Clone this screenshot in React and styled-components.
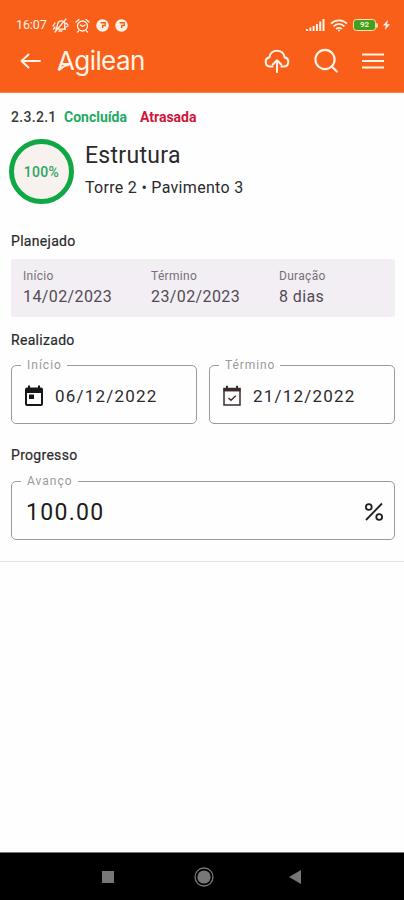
import React from 'react'
import styled, { createGlobalStyle } from 'styled-components'

const GlobalStyle = createGlobalStyle`
  * {
    box-sizing: border-box;
  }
  body {
    margin: 0;
    background: #fefefe;
    font-family: Roboto, "Liberation Sans", sans-serif;
    color: #2b2a2c;
  }
`

const Screen = styled.div`
  width: 404px;
  height: 900px;
  display: flex;
  flex-direction: column;
  overflow: hidden;
`

const Header = styled.header`
  height: 93px;
  flex: none;
  background: #fa5f1a;
  color: #fff3e8;
  padding-top: 14px;
  border-bottom: 1px solid #f98350;
`

const StatusBar = styled.div`
  height: 22px;
  display: flex;
  align-items: center;
  justify-content: space-between;
  padding: 0 14px 0 16px;
`

const StatusGroup = styled.div`
  display: flex;
  align-items: center;
  gap: ${props => props.$gap}px;
  & svg {
    display: block;
  }
`

const Clock = styled.span`
  font-size: 12.5px;
  line-height: 22px;
  width: 31px;
  letter-spacing: -0.1px;
  white-space: nowrap;
`

const AppBar = styled.div`
  height: 50px;
  display: flex;
  align-items: center;
  padding: 0 20px 0 19px;
  & svg {
    display: block;
  }
`

const Brand = styled.div`
  position: relative;
  margin-left: 15px;
  flex: 1;
  font-family: Inter, "Liberation Sans", sans-serif;
  font-size: 26px;
  line-height: 50px;
  letter-spacing: -0.6px;
  & svg {
    position: absolute;
    left: 0;
    top: 27px;
  }
`

const Actions = styled.div`
  display: flex;
  align-items: center;
  gap: 23px;
`

const Content = styled.main`
  padding: 14px 9px 0 11px;
  height: 469px;
  border-bottom: 1px solid #e6e6e6;
`

const Tags = styled.div`
  display: flex;
  font-size: 14px;
  line-height: 20px;
`

const Tag = styled.span`
  color: ${props => props.$color};
  font-weight: ${props => props.$bold ? 700 : 500};
  width: ${props => props.$width}px;
  letter-spacing: ${props => props.$spacing || 0}px;
  white-space: nowrap;
`

const Summary = styled.div`
  display: flex;
  align-items: center;
  gap: 11px;
  margin: 12px 0 0 -2px;
`

const Ring = styled.div`
  width: 65px;
  height: 65px;
  border: 5px solid #0fa844;
  border-radius: 50%;
  background: #f7f2ee;
  color: #2fa563;
  font-size: 14px;
  font-weight: 500;
  letter-spacing: 0.3px;
  display: flex;
  align-items: center;
  justify-content: center;
`

const Title = styled.h1`
  margin: 0;
  font-size: 23px;
  font-weight: 400;
  line-height: 32px;
  letter-spacing: 0.3px;
`

const Place = styled.p`
  margin: 0;
  font-size: 16px;
  line-height: 32px;
  letter-spacing: 0.3px;
`

const SectionTitle = styled.h2`
  margin: ${props => props.$top}px 0 ${props => props.$bottom}px;
  font-size: 14px;
  font-weight: 400;
  line-height: 20px;
  letter-spacing: 0.3px;
  -webkit-text-stroke: 0.2px;
`

const Planned = styled.div`
  height: 58px;
  border-radius: 3px;
  background: #f2eef4;
  display: grid;
  grid-template-columns: 128px 128px 1fr;
  padding: 8px 12px 0;
`

const PlannedLabel = styled.div`
  font-size: 12px;
  line-height: 18px;
  color: #777078;
  letter-spacing: 0.3px;
`

const PlannedValue = styled.div`
  font-size: 16px;
  line-height: 24px;
  color: #504c53;
  letter-spacing: 0.4px;
`

const Fields = styled.div`
  display: grid;
  grid-template-columns: ${props => props.$columns};
  gap: 12px;
`

const Field = styled.fieldset`
  margin: 0;
  min-width: 0;
  height: 65px;
  border: 1px solid #9a9a9a;
  border-radius: 5px;
  padding: 0 10px 0 12px;
`

const Legend = styled.legend`
  margin-left: -3px;
  padding: 0 5px 0 6px;
  font-size: 12px;
  line-height: 12px;
  letter-spacing: ${props => props.$spacing}px;
  color: #9a9a9a;
`

const FieldRow = styled.div`
  height: 50px;
  display: flex;
  align-items: center;
`

const DateText = styled.span`
  margin-left: 11px;
  font-size: 17px;
  letter-spacing: 1.2px;
`

const Amount = styled.span`
  flex: 1;
  margin-left: 2px;
  font-size: 23px;
  letter-spacing: 1.3px;
  color: #1c1c1c;
`

const Blank = styled.div`
  flex: 1;
`

const NavBar = styled.nav`
  height: 48px;
  background: #000;
  border-top: 1px solid #777;
  display: flex;
  align-items: center;
  padding-left: 101px;
  gap: 79px;
`

const MutedIcon = () => (
  <svg width="17" height="15" viewBox="0 0 17 15" fill="none" stroke="currentColor" strokeWidth="1.3" strokeLinecap="round">
    <path d="M4 11c1-1 1-2.500 1.500-4.500C6 4 8 2.500 10.500 3c2 .6 2.700 2.300 2.300 4.500-.3 1.600-.3 2.500.4 3.700zM7 13h3M3 14 14 1M1 8l2-3M1.500 11 3 9M14 5l2 2M14 9l2-1" />
  </svg>
)

const AlarmIcon = () => (
  <svg width="15" height="15" viewBox="0 0 15 15" fill="none" stroke="currentColor" strokeWidth="1.3" strokeLinecap="round">
    <circle cx="7.500" cy="8" r="5" />
    <path d="M1 4 4 1.500M14 4l-3-2.500M3.500 13l-1 1M11.500 13l1 1M5.500 7l2 1.500L10 7" />
  </svg>
)

const PhoneBadge = () => (
  <svg width="13" height="13" viewBox="0 0 13 13">
    <circle cx="6.500" cy="6.500" r="6.200" fill="currentColor" />
    <path d="M4.600 3.800h4.600v2.700H6.700v2.800" fill="none" stroke="#fa5f1a" strokeWidth="1.400" />
  </svg>
)

const SignalIcon = () => (
  <svg width="19" height="12" viewBox="0 0 19 12" fill="currentColor">
    <path d="M0 10h2v2H0zM3.300 8.500h2V12h-2zM6.600 7h2v5h-2zM9.900 5h2v7h-2zM13.200 2.500h2V12h-2zM16.500 0h2v12h-2z" />
  </svg>
)

const WifiIcon = () => (
  <svg width="18" height="13" viewBox="0 0 18 13" fill="none" stroke="currentColor" strokeWidth="1.700">
    <path d="M1 4.500c4.800-4.300 11.200-4.300 16 0M3.600 7.300c3.300-2.900 7.500-2.900 10.800 0M6.200 10c1.700-1.500 3.900-1.500 5.600 0" />
    <circle cx="9" cy="11.500" r="1" fill="currentColor" stroke="none" />
  </svg>
)

const Battery = styled.span`
  width: 23px;
  height: 12px;
  border: 1.500px solid #f5dcb4;
  border-radius: 3.500px;
  background: #43a01c;
  font-size: 8px;
  font-weight: 700;
  line-height: 10px;
  text-align: center;
  color: #e6f3c4;
`

const BatteryTip = styled.span`
  width: 2px;
  height: 5px;
  border-radius: 0 2px 2px 0;
  background: #f5dcb4;
`

const BoltIcon = () => (
  <svg width="7" height="10" viewBox="0 0 7 10" fill="currentColor">
    <path d="M4.800 0 0 5.600h2.800L2 10l5-5.800H4.200z" />
  </svg>
)

const BackIcon = () => (
  <svg width="23" height="20" viewBox="0 0 23 20" fill="none" stroke="currentColor" strokeWidth="2" strokeLinecap="round" strokeLinejoin="round">
    <path d="M21 10H2.500M9.500 3.500 2.500 10l7 6.500" />
  </svg>
)

const CloudIcon = () => (
  <svg width="26" height="25" viewBox="0 0 26 25" fill="none" stroke="currentColor" strokeWidth="2.100" strokeLinecap="round" strokeLinejoin="round">
    <path d="M8.500 17.500H6.200a4.600 4.600 0 0 1-.8-9.100C5.800 4.500 9 1.800 13 1.800s7.200 2.700 7.600 6.600a4.600 4.600 0 0 1-.8 9.100h-2.300" />
    <path d="M13 23V12M8.800 15.500 13 11.300l4.200 4.200" />
  </svg>
)

const SearchIcon = () => (
  <svg width="26" height="26" viewBox="0 0 26 26" fill="none" stroke="currentColor" strokeWidth="2.100" strokeLinecap="round">
    <circle cx="12" cy="11.500" r="9.600" />
    <path d="m18.800 18.500 5 5" />
  </svg>
)

const MenuIcon = () => (
  <svg width="22" height="18" viewBox="0 0 22 18" stroke="currentColor" strokeWidth="2.200">
    <path d="M0 2.500h22M0 9h22M0 15.500h22" />
  </svg>
)

const CalendarIcon = () => (
  <svg width="20" height="22" viewBox="0 0 20 22">
    <path d="M3 2.500h14a2 2 0 0 1 2 2V19a2 2 0 0 1-2 2H3a2 2 0 0 1-2-2V4.500a2 2 0 0 1 2-2zM3 8v11h14V8z" fill="#171717" fillRule="evenodd" />
    <path d="M4 .5h2V4H4zM14 .5h2V4h-2zM5 9.500h5v4.500H5z" fill="#171717" />
  </svg>
)

const CalendarCheckIcon = () => (
  <svg width="20" height="22" viewBox="0 0 20 22" fill="none" stroke="#3a2f2d">
    <path d="M2 3.500h16V20H2z" strokeWidth="1.500" />
    <path d="M1.500 4.800h17" strokeWidth="3.300" />
    <path d="M5 .8v4M15 .8v4" strokeWidth="2" />
    <path d="m6.500 13 2.500 2.300 4.800-4.500" strokeWidth="1.500" />
  </svg>
)

const PercentIcon = () => (
  <svg width="20" height="20" viewBox="0 0 20 20" fill="none" stroke="#1f1f1f" strokeWidth="1.800">
    <circle cx="4.800" cy="5" r="2.900" />
    <circle cx="15.200" cy="15" r="2.900" />
    <path d="M18 1.500 2 18" />
  </svg>
)

const planned = [
  { label: 'Início', value: '14/02/2023' },
  { label: 'Término', value: '23/02/2023' },
  { label: 'Duração', value: '8 dias' },
]

const App = () => {
  return (
    <Screen>
      <GlobalStyle />
      <Header>
        <StatusBar>
          <StatusGroup $gap={5}>
            <Clock>16:07</Clock>
            <StatusGroup $gap={6}>
              <MutedIcon />
              <AlarmIcon />
              <PhoneBadge />
              <PhoneBadge />
            </StatusGroup>
          </StatusGroup>
          <StatusGroup $gap={5}>
            <SignalIcon />
            <WifiIcon />
            <StatusGroup $gap={0}>
              <Battery>92</Battery>
              <BatteryTip />
            </StatusGroup>
            <BoltIcon />
          </StatusGroup>
        </StatusBar>
        <AppBar>
          <BackIcon />
          <Brand>
            Agilean
            <svg width="16" height="9" viewBox="0 0 16 9" fill="none" stroke="currentColor" strokeWidth="2">
              <path d="M1.500 7C4 7 5 2 12 2" />
            </svg>
          </Brand>
          <Actions>
            <CloudIcon />
            <SearchIcon />
            <MenuIcon />
          </Actions>
        </AppBar>
      </Header>
      <Content>
        <Tags>
          <Tag $color="#3b3b3b" $width={53} $spacing={0.3}>2.3.2.1</Tag>
          <Tag $color="#22aa61" $width={76} $bold>Concluída</Tag>
          <Tag $color="#d0143c" $width={70} $bold>Atrasada</Tag>
        </Tags>
        <Summary>
          <Ring>100%</Ring>
          <div>
            <Title>Estrutura</Title>
            <Place>Torre 2 • Pavimento 3</Place>
          </div>
        </Summary>
        <SectionTitle $top={27} $bottom={8}>Planejado</SectionTitle>
        <Planned>
          {planned.map(item => (
            <div key={item.label}>
              <PlannedLabel>{item.label}</PlannedLabel>
              <PlannedValue>{item.value}</PlannedValue>
            </div>
          ))}
        </Planned>
        <SectionTitle $top={13} $bottom={9}>Realizado</SectionTitle>
        <Fields $columns="1fr 1fr">
          <Field>
            <Legend $spacing={1}>Início</Legend>
            <FieldRow>
              <CalendarIcon />
              <DateText>06/12/2022</DateText>
            </FieldRow>
          </Field>
          <Field>
            <Legend $spacing={0.9}>Término</Legend>
            <FieldRow>
              <CalendarCheckIcon />
              <DateText>21/12/2022</DateText>
            </FieldRow>
          </Field>
        </Fields>
        <SectionTitle $top={21} $bottom={10}>Progresso</SectionTitle>
        <Fields $columns="1fr">
          <Field>
            <Legend $spacing={1}>Avanço</Legend>
            <FieldRow>
              <Amount>100.00</Amount>
              <PercentIcon />
            </FieldRow>
          </Field>
        </Fields>
      </Content>
      <Blank />
      <NavBar>
        <svg width="14" height="14" viewBox="0 0 14 14">
          <path d="M1 1h12v12H1z" fill="#777" />
        </svg>
        <svg width="20" height="20" viewBox="0 0 20 20">
          <circle cx="10" cy="10" r="9" fill="none" stroke="#777" strokeWidth="1.300" />
          <circle cx="10" cy="10" r="6.600" fill="#777" />
        </svg>
        <svg width="12" height="14" viewBox="0 0 12 14" style={{ marginLeft: -4 }}>
          <path d="M12 0v14L0 7z" fill="#777" />
        </svg>
      </NavBar>
    </Screen>
  )
}

export default App
